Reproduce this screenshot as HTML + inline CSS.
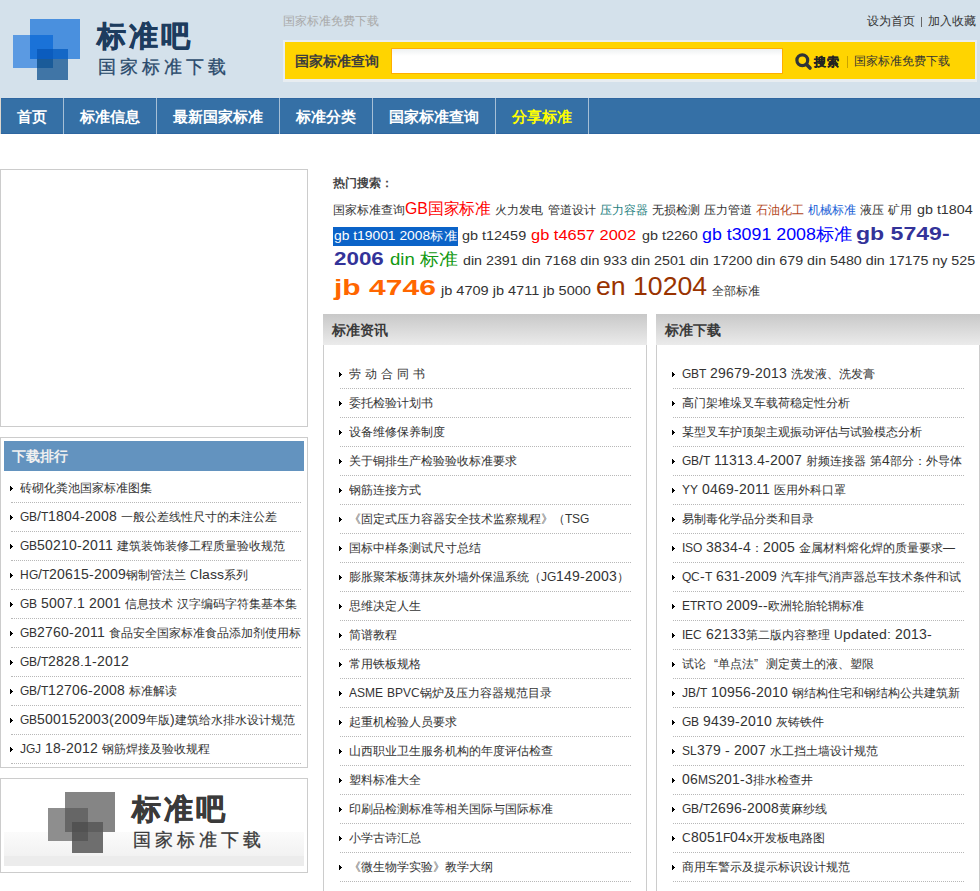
<!DOCTYPE html>
<html><head><meta charset="utf-8"><title>标准吧</title>
<style>
@font-face{font-family:"LV";src:local("Liberation Sans");size-adjust:100%;unicode-range:U+0041-005A;}
@font-face{font-family:"LV";src:local("Liberation Sans");size-adjust:113%;unicode-range:U+0020-0040,U+005B-007E,U+00A0-02FF;}
html,body{margin:0;padding:0;background:#fff;}
body{width:980px;height:891px;overflow:hidden;position:relative;font-family:"LV","Liberation Sans",sans-serif;font-size:12px;color:#333;}
div,span{box-sizing:border-box;}
.abs,.sq,.li,.t{position:absolute;}
.t{white-space:nowrap;line-height:1;}
#hd{position:absolute;left:0;top:0;width:980px;height:98px;background:#d4e1eb;}
#nav{position:absolute;left:0;top:98px;width:980px;height:36px;background:#3570a6;}
#nav .sep{position:absolute;top:0;width:1px;height:36px;background:#a6bfd6;}
#nav .t{color:#fff;font-weight:bold;font-size:15px;}
.box{position:absolute;border:1px solid #cccccc;background:#fff;}
.li{height:29px;border-bottom:1px dotted #b8b8b8;}
.li i{position:absolute;top:12px;width:3px;height:5px;display:block;}
.li i b{position:absolute;display:block;width:1px;background:#000;}
.li i b:nth-child(1){left:0;top:0;height:5px;}
.li i b:nth-child(2){left:1px;top:1px;height:3px;}
.li i b:nth-child(3){left:2px;top:2px;height:1px;}
.li span{position:absolute;top:7px;white-space:nowrap;overflow:hidden;line-height:14px;font-size:12px;color:#333;}
.fq{display:inline-block;width:12px;text-align:right;font-weight:normal;}
.ph{position:absolute;top:314px;height:31px;background:linear-gradient(#c8c8c8,#ebebeb);}
.ph .t{font-weight:bold;font-size:14px;color:#3a3a3a;}
.pb{position:absolute;top:345px;height:546px;border-left:1px solid #cccccc;border-right:1px solid #cccccc;}
.h{position:absolute;height:0;line-height:0;white-space:nowrap;transform-origin:0 0;font-family:"Liberation Sans",sans-serif;}
</style></head><body>
<div id="hd">
<div class="sq" style="left:30px;top:19px;width:50px;height:40px;background:#4a90de"></div><div class="sq" style="left:13px;top:35px;width:40px;height:33px;background:#5b9ae2"></div><div class="sq" style="left:30px;top:35px;width:23px;height:24px;background:#1a72d8"></div><div class="sq" style="left:37px;top:49px;width:31px;height:31px;background:#4075a6"></div><div class="sq" style="left:53px;top:49px;width:15px;height:10px;background:#1467c6"></div><div class="sq" style="left:37px;top:59px;width:16px;height:9px;background:#1a5b99"></div><div class="sq" style="left:37px;top:49px;width:16px;height:10px;background:#0b5cbe"></div>
<div class="t" style="left:97px;top:20px;font-size:29px;font-weight:bold;color:#1d3c5e;-webkit-text-stroke:0.6px #1d3c5e;letter-spacing:3px">标准吧</div>
<div class="t" style="left:98px;top:57px;font-size:18px;letter-spacing:4px;color:#2a4a6b;-webkit-text-stroke:0.3px #2a4a6b">国家标准下载</div>
<div class="t" style="left:283px;top:15px;font-size:12px;color:#a9a9a9;">国家标准免费下载</div>
<div class="t" style="left:867px;top:15px;font-size:12px;color:#333;">设为首页</div><div class="abs" style="left:921px;top:17px;width:1px;height:10px;background:#666"></div><div class="t" style="left:928px;top:15px;font-size:12px;color:#333;">加入收藏</div>
<div class="abs" style="left:283px;top:40px;width:694px;height:42px;background:#e8edf1;"></div>
<div class="abs" style="left:285px;top:42px;width:690px;height:37px;background:#ffd400;"></div>
<div class="t" style="left:295px;top:54px;font-size:14px;font-weight:bold;color:#3d3d3d;">国家标准查询</div>
<div class="abs" style="left:391px;top:48px;width:392px;height:26px;background:linear-gradient(#eef1f2,#fff 7px);border:1px solid #ffae00;"></div>
<svg class="abs" style="left:792px;top:50px" width="22" height="22" viewBox="0 0 22 22"><circle cx="10.3" cy="10.2" r="5.4" fill="none" stroke="#2f3338" stroke-width="3.2"/><line x1="14.3" y1="14.3" x2="18" y2="18" stroke="#2f3338" stroke-width="3.6" stroke-linecap="round"/></svg>
<div class="t" style="left:814px;top:56px;font-size:12px;font-weight:bold;color:#222;-webkit-text-stroke:0.3px #222;letter-spacing:0.5px">搜索</div>
<div class="abs" style="left:847px;top:56px;width:1px;height:12px;background:#c9a200;"></div>
<div class="t" style="left:854px;top:55px;font-size:12px;color:#333;">国家标准免费下载</div>
</div>
<div id="nav"><div class="abs" style="left:0;top:0;width:1px;height:36px;background:#dcd6ce"></div><div class="abs" style="left:1px;top:0;width:979px;height:1px;background:#2e66a0"></div><div class="abs" style="left:1px;top:35px;width:979px;height:1px;background:#2e66a0"></div>
<div class="sep" style="left:63px"></div><div class="sep" style="left:156px"></div><div class="sep" style="left:279px"></div><div class="sep" style="left:372px"></div><div class="sep" style="left:495px"></div><div class="sep" style="left:588px"></div>
<div class="t" style="left:17px;top:11px;">首页</div>
<div class="t" style="left:80px;top:11px;">标准信息</div>
<div class="t" style="left:173px;top:11px;">最新国家标准</div>
<div class="t" style="left:296px;top:11px;">标准分类</div>
<div class="t" style="left:389px;top:11px;">国家标准查询</div>
<div class="t" style="left:512px;top:11px;color:#ffff00;">分享标准</div>
</div>

<div class="box" style="left:0;top:169px;width:308px;height:258px;"></div>
<div class="box" style="left:0;top:437px;width:308px;height:331px;">
<div class="abs" style="left:3px;top:3px;width:300px;height:30px;background:#6393bf;"></div>
<div class="t" style="left:11px;top:11px;font-size:14px;font-weight:bold;color:#f0f0f0;">下载排行</div>
</div>
<div class="li" style="left:11px;top:474px;width:290px"><i style="left:-1px"><b></b><b></b><b></b></i><span style="left:9px;width:281px">砖砌化粪池国家标准图集</span></div>
<div class="li" style="left:11px;top:503px;width:290px"><i style="left:-1px"><b></b><b></b><b></b></i><span style="left:9px;width:281px">GB/T1804-2008 一般公差线性尺寸的未注公差</span></div>
<div class="li" style="left:11px;top:532px;width:290px"><i style="left:-1px"><b></b><b></b><b></b></i><span style="left:9px;width:281px">GB50210-2011 建筑装饰装修工程质量验收规范</span></div>
<div class="li" style="left:11px;top:561px;width:290px"><i style="left:-1px"><b></b><b></b><b></b></i><span style="left:9px;width:281px">HG/T20615-2009钢制管法兰 Class系列</span></div>
<div class="li" style="left:11px;top:590px;width:290px"><i style="left:-1px"><b></b><b></b><b></b></i><span style="left:9px;width:281px">GB 5007.1 2001 信息技术 汉字编码字符集基本集</span></div>
<div class="li" style="left:11px;top:619px;width:290px"><i style="left:-1px"><b></b><b></b><b></b></i><span style="left:9px;width:281px">GB2760-2011 食品安全国家标准食品添加剂使用标</span></div>
<div class="li" style="left:11px;top:648px;width:290px"><i style="left:-1px"><b></b><b></b><b></b></i><span style="left:9px;width:281px">GB/T2828.1-2012</span></div>
<div class="li" style="left:11px;top:677px;width:290px"><i style="left:-1px"><b></b><b></b><b></b></i><span style="left:9px;width:281px">GB/T12706-2008 标准解读</span></div>
<div class="li" style="left:11px;top:706px;width:290px"><i style="left:-1px"><b></b><b></b><b></b></i><span style="left:9px;width:281px">GB500152003(2009年版)建筑给水排水设计规范</span></div>
<div class="li" style="left:11px;top:735px;width:290px"><i style="left:-1px"><b></b><b></b><b></b></i><span style="left:9px;width:281px">JGJ 18-2012 钢筋焊接及验收规程</span></div>
<div class="box" style="left:0;top:778px;width:308px;height:95px;">
<div class="abs" style="left:3px;top:53px;width:300px;height:34px;background:linear-gradient(#fbfbfb,#f2f2f2 70%,#ececec 70%,#ececec);"></div>
</div>
<div style="position:absolute;left:0;top:0;">
<div class="sq" style="left:65px;top:792px;width:50px;height:40px;background:#858585"></div><div class="sq" style="left:48px;top:808px;width:40px;height:33px;background:#8e8e8e"></div><div class="sq" style="left:65px;top:808px;width:23px;height:24px;background:#666666"></div><div class="sq" style="left:72px;top:822px;width:31px;height:31px;background:#6e6e6e"></div><div class="sq" style="left:88px;top:822px;width:15px;height:10px;background:#5e5e5e"></div><div class="sq" style="left:72px;top:832px;width:16px;height:9px;background:#595959"></div><div class="sq" style="left:72px;top:822px;width:16px;height:10px;background:#525252"></div>
<div class="t" style="left:132px;top:793px;font-size:29px;font-weight:bold;color:#3a3a3a;-webkit-text-stroke:0.6px #3a3a3a;letter-spacing:3px">标准吧</div>
<div class="t" style="left:133px;top:830px;font-size:18px;letter-spacing:4px;color:#3a3a3a;-webkit-text-stroke:0.3px #3a3a3a">国家标准下载</div>
</div>

<div class="t" style="left:333px;top:177px;font-weight:bold;color:#444;">热门搜索：</div>
<div class="hot">
<div class="abs" style="left:333px;top:227px;width:125px;height:19px;background:#0b63c8;"></div>
<div class="h" style="left:332.6px;top:210px;font-size:12px;color:#333;font-weight:normal;">国家标准查询</div>
<div class="h" style="left:405.01px;top:209px;font-size:16px;color:#ff0000;font-weight:normal;transform:scaleX(0.9884);">GB国家标准</div>
<div class="h" style="left:495.4px;top:210px;font-size:12px;color:#333;font-weight:normal;">火力发电</div>
<div class="h" style="left:548.2px;top:210px;font-size:12px;color:#333;font-weight:normal;">管道设计</div>
<div class="h" style="left:600.2px;top:210px;font-size:12px;color:#1f7f7f;font-weight:normal;">压力容器</div>
<div class="h" style="left:652.0px;top:210px;font-size:12px;color:#333;font-weight:normal;">无损检测</div>
<div class="h" style="left:703.8px;top:210px;font-size:12px;color:#333;font-weight:normal;">压力管道</div>
<div class="h" style="left:756.25px;top:210px;font-size:12px;color:#b3461a;font-weight:normal;">石油化工</div>
<div class="h" style="left:808.25px;top:210px;font-size:12px;color:#1a5fd6;font-weight:normal;">机械标准</div>
<div class="h" style="left:860.0px;top:210px;font-size:12px;color:#333;font-weight:normal;">液压</div>
<div class="h" style="left:888.0px;top:210px;font-size:12px;color:#333;font-weight:normal;">矿用</div>
<div class="h" style="left:916.7px;top:210px;font-size:12.48px;color:#333;font-weight:normal;transform:scaleX(1.1479);">gb t1804</div>
<div class="h" style="left:333.8px;top:236px;font-size:12.48px;color:#fff;font-weight:normal;transform:scaleX(1.1099);">gb t19001 2008标准</div>
<div class="h" style="left:462.2px;top:236px;font-size:12.48px;color:#333;font-weight:normal;transform:scaleX(1.1564);">gb t12459</div>
<div class="h" style="left:531.3px;top:235px;font-size:14.56px;color:#ff0000;font-weight:normal;transform:scaleX(1.129);">gb t4657 2002</div>
<div class="h" style="left:641.5px;top:236px;font-size:12.48px;color:#333;font-weight:normal;transform:scaleX(1.15);">gb t2260</div>
<div class="h" style="left:702.4px;top:235px;font-size:16.64px;color:#0000ff;font-weight:normal;transform:scaleX(1.0714);">gb t3091 2008标准</div>
<div class="h" style="left:856.29px;top:234px;font-size:17.68px;color:#333399;font-weight:bold;transform:scaleX(1.3057);">gb 5749-</div>
<div class="h" style="left:334.1px;top:259px;font-size:17.68px;color:#333399;font-weight:bold;transform:scaleX(1.2667);">2006</div>
<div class="h" style="left:389.6px;top:260px;font-size:16.64px;color:#119911;font-weight:normal;transform:scaleX(1.1148);">din 标准</div>
<div class="h" style="left:462.75px;top:261px;font-size:12.48px;color:#333;font-weight:normal;transform:scaleX(1.1434);">din 2391 din 7168 din 933 din 2501 din 17200 din 679 din 5480 din 17175 ny 525</div>
<div class="h" style="left:333.81px;top:287px;font-size:22.88px;color:#ff6600;font-weight:bold;transform:scaleX(1.3141);">jb 4746</div>
<div class="h" style="left:440.76px;top:291px;font-size:12.48px;color:#333;font-weight:normal;transform:scaleX(1.1646);">jb 4709 jb 4711 jb 5000</div>
<div class="h" style="left:595.93px;top:286px;font-size:24.96px;color:#993300;font-weight:normal;transform:scaleX(1.068);">en 10204</div>
<div class="h" style="left:712.3px;top:291px;font-size:12px;color:#333;font-weight:normal;">全部标准</div>
</div>

<div class="ph" style="left:323px;width:324px;"><div class="t" style="left:9px;top:9px;">标准资讯</div></div>
<div class="pb" style="left:323px;width:324px;"></div>
<div class="li" style="left:340px;top:360px;width:291px"><i style="left:-1px"><b></b><b></b><b></b></i><span style="left:9px;width:282px">劳 动 合 同 书</span></div>
<div class="li" style="left:340px;top:389px;width:291px"><i style="left:-1px"><b></b><b></b><b></b></i><span style="left:9px;width:282px">委托检验计划书</span></div>
<div class="li" style="left:340px;top:418px;width:291px"><i style="left:-1px"><b></b><b></b><b></b></i><span style="left:9px;width:282px">设备维修保养制度</span></div>
<div class="li" style="left:340px;top:447px;width:291px"><i style="left:-1px"><b></b><b></b><b></b></i><span style="left:9px;width:282px">关于铜排生产检验验收标准要求</span></div>
<div class="li" style="left:340px;top:476px;width:291px"><i style="left:-1px"><b></b><b></b><b></b></i><span style="left:9px;width:282px">钢筋连接方式</span></div>
<div class="li" style="left:340px;top:505px;width:291px"><i style="left:-1px"><b></b><b></b><b></b></i><span style="left:9px;width:282px">《固定式压力容器安全技术监察规程》（TSG</span></div>
<div class="li" style="left:340px;top:534px;width:291px"><i style="left:-1px"><b></b><b></b><b></b></i><span style="left:9px;width:282px">国标中样条测试尺寸总结</span></div>
<div class="li" style="left:340px;top:563px;width:291px"><i style="left:-1px"><b></b><b></b><b></b></i><span style="left:9px;width:282px">膨胀聚苯板薄抹灰外墙外保温系统（JG149-2003）</span></div>
<div class="li" style="left:340px;top:592px;width:291px"><i style="left:-1px"><b></b><b></b><b></b></i><span style="left:9px;width:282px">思维决定人生</span></div>
<div class="li" style="left:340px;top:621px;width:291px"><i style="left:-1px"><b></b><b></b><b></b></i><span style="left:9px;width:282px">简谱教程</span></div>
<div class="li" style="left:340px;top:650px;width:291px"><i style="left:-1px"><b></b><b></b><b></b></i><span style="left:9px;width:282px">常用铁板规格</span></div>
<div class="li" style="left:340px;top:679px;width:291px"><i style="left:-1px"><b></b><b></b><b></b></i><span style="left:9px;width:282px">ASME BPVC锅炉及压力容器规范目录</span></div>
<div class="li" style="left:340px;top:708px;width:291px"><i style="left:-1px"><b></b><b></b><b></b></i><span style="left:9px;width:282px">起重机检验人员要求</span></div>
<div class="li" style="left:340px;top:737px;width:291px"><i style="left:-1px"><b></b><b></b><b></b></i><span style="left:9px;width:282px">山西职业卫生服务机构的年度评估检查</span></div>
<div class="li" style="left:340px;top:766px;width:291px"><i style="left:-1px"><b></b><b></b><b></b></i><span style="left:9px;width:282px">塑料标准大全</span></div>
<div class="li" style="left:340px;top:795px;width:291px"><i style="left:-1px"><b></b><b></b><b></b></i><span style="left:9px;width:282px">印刷品检测标准等相关国际与国际标准</span></div>
<div class="li" style="left:340px;top:824px;width:291px"><i style="left:-1px"><b></b><b></b><b></b></i><span style="left:9px;width:282px">小学古诗汇总</span></div>
<div class="li" style="left:340px;top:853px;width:291px"><i style="left:-1px"><b></b><b></b><b></b></i><span style="left:9px;width:282px">《微生物学实验》教学大纲</span></div>
<div class="ph" style="left:656px;width:324px;"><div class="t" style="left:9px;top:9px;">标准下载</div></div>
<div class="pb" style="left:656px;width:324px;"></div>
<div class="li" style="left:673px;top:360px;width:291px"><i style="left:-1px"><b></b><b></b><b></b></i><span style="left:9px;width:290px">GBT 29679-2013 洗发液、洗发膏</span></div>
<div class="li" style="left:673px;top:389px;width:291px"><i style="left:-1px"><b></b><b></b><b></b></i><span style="left:9px;width:290px">高门架堆垛叉车载荷稳定性分析</span></div>
<div class="li" style="left:673px;top:418px;width:291px"><i style="left:-1px"><b></b><b></b><b></b></i><span style="left:9px;width:290px">某型叉车护顶架主观振动评估与试验模态分析</span></div>
<div class="li" style="left:673px;top:447px;width:291px"><i style="left:-1px"><b></b><b></b><b></b></i><span style="left:9px;width:290px">GB/T 11313.4-2007 射频连接器 第4部分：外导体</span></div>
<div class="li" style="left:673px;top:476px;width:291px"><i style="left:-1px"><b></b><b></b><b></b></i><span style="left:9px;width:290px">YY 0469-2011 医用外科口罩</span></div>
<div class="li" style="left:673px;top:505px;width:291px"><i style="left:-1px"><b></b><b></b><b></b></i><span style="left:9px;width:290px">易制毒化学品分类和目录</span></div>
<div class="li" style="left:673px;top:534px;width:291px"><i style="left:-1px"><b></b><b></b><b></b></i><span style="left:9px;width:290px">ISO 3834-4：2005 金属材料熔化焊的质量要求—</span></div>
<div class="li" style="left:673px;top:563px;width:291px"><i style="left:-1px"><b></b><b></b><b></b></i><span style="left:9px;width:290px">QC-T 631-2009 汽车排气消声器总车技术条件和试</span></div>
<div class="li" style="left:673px;top:592px;width:291px"><i style="left:-1px"><b></b><b></b><b></b></i><span style="left:9px;width:290px">ETRTO 2009--欧洲轮胎轮辋标准</span></div>
<div class="li" style="left:673px;top:621px;width:291px"><i style="left:-1px"><b></b><b></b><b></b></i><span style="left:9px;width:290px">IEC 62133第二版内容整理 Updated: 2013-</span></div>
<div class="li" style="left:673px;top:650px;width:291px"><i style="left:-1px"><b></b><b></b><b></b></i><span style="left:9px;width:290px">试论<b class=fq>“</b>单点法<b class=fq style=text-align:left>”</b>测定黄土的液、塑限</span></div>
<div class="li" style="left:673px;top:679px;width:291px"><i style="left:-1px"><b></b><b></b><b></b></i><span style="left:9px;width:290px">JB/T 10956-2010 钢结构住宅和钢结构公共建筑新</span></div>
<div class="li" style="left:673px;top:708px;width:291px"><i style="left:-1px"><b></b><b></b><b></b></i><span style="left:9px;width:290px">GB 9439-2010 灰铸铁件</span></div>
<div class="li" style="left:673px;top:737px;width:291px"><i style="left:-1px"><b></b><b></b><b></b></i><span style="left:9px;width:290px">SL379 - 2007 水工挡土墙设计规范</span></div>
<div class="li" style="left:673px;top:766px;width:291px"><i style="left:-1px"><b></b><b></b><b></b></i><span style="left:9px;width:290px">06MS201-3排水检查井</span></div>
<div class="li" style="left:673px;top:795px;width:291px"><i style="left:-1px"><b></b><b></b><b></b></i><span style="left:9px;width:290px">GB/T2696-2008黄麻纱线</span></div>
<div class="li" style="left:673px;top:824px;width:291px"><i style="left:-1px"><b></b><b></b><b></b></i><span style="left:9px;width:290px">C8051F04x开发板电路图</span></div>
<div class="li" style="left:673px;top:853px;width:291px"><i style="left:-1px"><b></b><b></b><b></b></i><span style="left:9px;width:290px">商用车警示及提示标识设计规范</span></div>
</body></html>
